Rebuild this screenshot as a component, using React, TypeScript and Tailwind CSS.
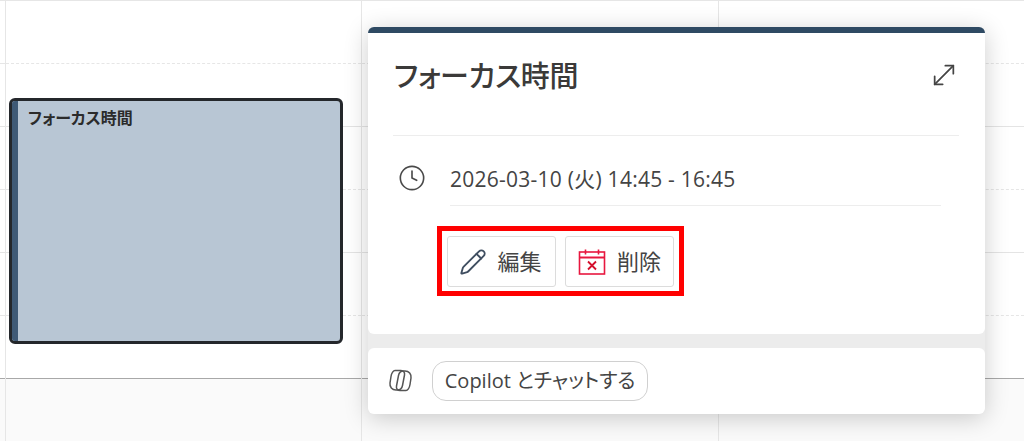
import { Clock, MoveDiagonal, Pencil } from "lucide-react";

const font = { fontFamily: '"Open Sans", "Noto Sans CJK JP", sans-serif' };

function GridColumn({ className }: { className: string }) {
  return (
    <div className={className}>
      <div className="h-[63px] border-b border-dashed border-[#e6e6e6]" />
      <div className="h-[63px] border-b border-[#e4e4e4]" />
      <div className="h-[63px] border-b border-dashed border-[#e6e6e6]" />
      <div className="h-[63px] border-b border-[#e4e4e4]" />
      <div className="h-[63px] border-b border-dashed border-[#e6e6e6]" />
      <div className="h-[63px] border-b border-[#a8a8a8]" />
      <div className="h-[63px] bg-[#fafafa]" />
    </div>
  );
}

function CalendarDeleteIcon() {
  return (
    <svg width="28" height="28" viewBox="0 0 28 28" fill="none" stroke="#e8173f" strokeWidth="1.6">
      <rect x="1.5" y="4" width="25" height="22" />
      <path d="M1.5 9.5h25" strokeWidth="2" />
      <path d="M7.5 1.5v5M20.5 1.5v5" />
      <path d="m10 13.5 8 8M18 13.5l-8 8" stroke="#d4102c" strokeWidth="1.8" />
    </svg>
  );
}

function CopilotIcon() {
  const blob = "M9 3.5h6c2.5 0 4 2 3.5 4.5l-2 10.5c-.5 2.5-2.5 4.5-5 4.5h-1.5c-4 0-6.5-3-6-7l1-6.5c.5-3.5 2.5-6 4-6Z";
  return (
    <svg width="28" height="28" viewBox="0 0 28 28" fill="none" stroke="#555555" strokeWidth="1.5">
      <path d={blob} />
      <path d={blob} transform="rotate(180 14.5 13.5)" />
    </svg>
  );
}

export default function App() {
  return (
    <div className="relative flex h-[441px] w-[1024px] overflow-hidden bg-white [font-feature-settings:'palt']" style={font}>
      <GridColumn className="w-[5px] border-t border-[#e6e6e6]" />
      <GridColumn className="w-[356px] border-l border-t border-[#e6e6e6]" />
      <GridColumn className="w-[357px] border-l border-t border-[#e6e6e6]" />
      <GridColumn className="flex-1 border-l border-t border-[#e6e6e6]" />

      {/* selected event */}
      <div className="absolute left-[9px] top-[98px] h-[246px] w-[334px] overflow-hidden rounded-[6px] border-[3px] border-[#24272b] bg-[#b8c6d4]">
        <div className="flex h-full">
          <div className="w-[6px] bg-[#3f5a76]" />
          <p className="ml-[10px] mt-[5px] text-[16px] font-semibold leading-[24px] text-[#2b2b2b]">フォーカス時間</p>
        </div>
      </div>

      {/* popup */}
      <div className="absolute left-[368px] top-[27px] flex w-[617px] flex-col overflow-hidden rounded-[6px] bg-[#ececec] shadow-[0_4px_24px_rgba(0,0,0,0.2)]">
        <div className="h-[307px] rounded-b-[6px] border-t-[6px] border-[#2f4a63] bg-white pl-[25px] pr-[26px]">
          <div className="flex h-[103px] items-start justify-between border-b border-[#ededed]">
            <h1 className="ml-[1px] mt-[21px] text-[29px] font-medium leading-[44px] tracking-[-0.3px] text-[#3b3a39]">フォーカス時間</h1>
            <MoveDiagonal className="mt-[26px] mr-[-1px] h-[32px] w-[32px] text-[#444444]" strokeWidth={1.3} />
          </div>
          <div className="flex items-start">
            <Clock className="ml-[5px] mt-[28px] h-[28px] w-[28px] text-[#4a4a4a]" strokeWidth={1.4} />
            <p className="ml-[24px] mr-[18px] mt-[26px] h-[44px] flex-1 border-b border-[#ededed] text-[21px] leading-[34px] tracking-[0.25px] text-[#444444]">
              2026-03-10 (火) 14:45 - 16:45
            </p>
          </div>
          <div className="ml-[44px] mt-[20px] flex w-fit gap-[9px] border-[5px] border-[#ff0000] px-[5px] pb-[4px] pt-[5px]">
            <button className="flex h-[51px] w-[109px] items-center justify-center gap-[10px] rounded-[3px] border border-[#dcdcdc] bg-white text-[22px] text-[#444444]">
              <Pencil className="ml-[-2px] h-[28px] w-[28px] text-[#3f4e60]" strokeWidth={1.6} />
              編集
            </button>
            <button className="flex h-[51px] w-[109px] items-center justify-center gap-[11px] rounded-[3px] border border-[#dcdcdc] bg-white text-[22px] text-[#444444]">
              <CalendarDeleteIcon />
              削除
            </button>
          </div>
        </div>
        <div className="mt-[14px] flex h-[66px] items-center gap-[18px] rounded-t-[6px] bg-white pl-[18px]">
          <CopilotIcon />
          <button className="h-[40px] w-[216px] rounded-[14px] border border-[#d0d0d0] text-[20px] leading-[36px] text-[#444444]">
            Copilot とチャットする
          </button>
        </div>
      </div>
    </div>
  );
}
